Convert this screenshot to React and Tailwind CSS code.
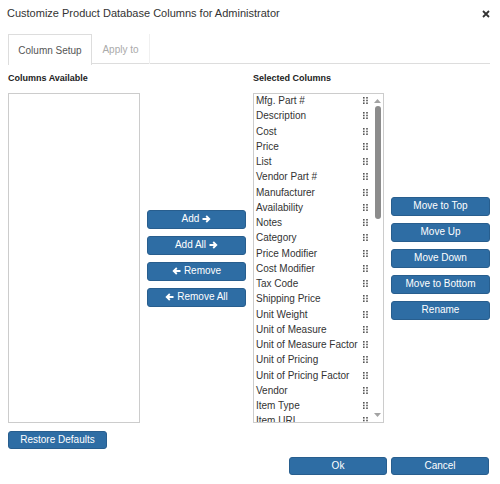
import React from 'react';

const selected = [
    'Mfg. Part #',
    'Description',
    'Cost',
    'Price',
    'List',
    'Vendor Part #',
    'Manufacturer',
    'Availability',
    'Notes',
    'Category',
    'Price Modifier',
    'Cost Modifier',
    'Tax Code',
    'Shipping Price',
    'Unit Weight',
    'Unit of Measure',
    'Unit of Measure Factor',
    'Unit of Pricing',
    'Unit of Pricing Factor',
    'Vendor',
    'Item Type',
    'Item URL',
];

const Grip = () => (
    <svg width="5" height="7" viewBox="0 0 5 7" className="shrink-0">
        {[0, 2.7, 5.4].map((y) => (
            <g key={y} fill="#555">
                <rect x="0" y={y} width="1.6" height="1.6" />
                <rect x="3.2" y={y} width="1.6" height="1.6" />
            </g>
        ))}
    </svg>
);

const ArrowRight = () => (
    <svg width="9" height="8" viewBox="0 0 9 8" className="ml-[3px]">
        <path d="M0.5 4 H7 M4.2 1 L7.3 4 L4.2 7" stroke="#fff" strokeWidth="1.8" fill="none" />
    </svg>
);

const ArrowLeft = () => (
    <svg width="9" height="8" viewBox="0 0 9 8" className="mr-[3px]">
        <path d="M8.5 4 H2 M4.8 1 L1.7 4 L4.8 7" stroke="#fff" strokeWidth="1.8" fill="none" />
    </svg>
);

const Btn = ({ children, className = '' }) => (
    <button
        className={`flex items-center justify-center rounded-[3px] border border-[#285e8e] bg-[#2e6da4] text-[10px] text-white leading-none ${className}`}
    >
        {children}
    </button>
);

export default function App() {
    return (
        <div className="w-[500px] h-[484px] bg-white text-[#333] font-['Liberation_Sans',Arial,sans-serif] overflow-hidden">
            {/* header */}
            <div className="flex items-center justify-between pl-[7px] pr-[10px] h-[27px]">
                <div className="text-[11px]">Customize Product Database Columns for Administrator</div>
                <svg width="8" height="8" viewBox="0 0 8 8">
                    <path d="M1 1 L7 7 M7 1 L1 7" stroke="#333" strokeWidth="1.8" />
                </svg>
            </div>

            {/* tabs */}
            <div className="mt-[7px] ml-[8px] mr-[10px] flex border-b border-[#ddd] h-[30px]">
                <div className="w-[84px] h-[31px] border border-b-0 border-[#ddd] bg-white flex items-center justify-center text-[10px] text-[#555]">
                    Column Setup
                </div>
                <div className="w-[58px] h-[30px] border-r border-[#f0f0f0] flex items-center justify-center text-[10px] text-[#aaa]">
                    Apply to
                </div>
            </div>

            {/* body */}
            <div className="pl-[8px] pr-[10px] grid grid-cols-[132px_99px_131px_99px] gap-x-[7px]">
                <div className="h-[29px] pt-[8px] text-[9px] font-bold text-[#222]">Columns Available</div>
                <div />
                <div className="h-[29px] pt-[8px] text-[9px] font-bold text-[#222]">Selected Columns</div>
                <div />

                <div className="h-[330px] border border-[#ccc]" />

                <div className="flex flex-col justify-center gap-[7px]">
                    <Btn className="h-[19px]">
                        Add <ArrowRight />
                    </Btn>
                    <Btn className="h-[19px]">
                        Add All <ArrowRight />
                    </Btn>
                    <Btn className="h-[19px]">
                        <ArrowLeft /> Remove
                    </Btn>
                    <Btn className="h-[19px]">
                        <ArrowLeft /> Remove All
                    </Btn>
                </div>

                <div className="h-[330px] border border-[#ccc] flex overflow-hidden">
                    <div className="flex-1 flex flex-col -mt-[1px]">
                        {selected.map((name) => (
                            <div key={name} className="h-[15.25px] shrink-0 flex items-center justify-between pl-[2px] pr-[4px] text-[10px] text-[#333]">
                                <span className="whitespace-nowrap">{name}</span>
                                <Grip />
                            </div>
                        ))}
                    </div>
                    <div className="w-[11px] flex flex-col items-center pt-[5px] pb-[5px]">
                        <svg width="7" height="4" viewBox="0 0 7 4">
                            <path d="M0 4 L3.5 0 L7 4 Z" fill="#a3a3a3" />
                        </svg>
                        <div className="mt-[3px] w-[6px] h-[113px] rounded-full bg-[#8c8c8c]" />
                        <div className="flex-1" />
                        <svg width="7" height="4" viewBox="0 0 7 4">
                            <path d="M0 0 L3.5 4 L7 0 Z" fill="#a3a3a3" />
                        </svg>
                    </div>
                </div>

                <div className="flex flex-col justify-center gap-[7px]">
                    <Btn className="h-[19px]">Move to Top</Btn>
                    <Btn className="h-[19px]">Move Up</Btn>
                    <Btn className="h-[19px]">Move Down</Btn>
                    <Btn className="h-[19px]">Move to Bottom</Btn>
                    <Btn className="h-[19px]">Rename</Btn>
                </div>
            </div>

            <div className="pl-[8px] mt-[8px]">
                <Btn className="w-[99px] h-[18px]">Restore Defaults</Btn>
            </div>

            <div className="mt-[8px] pr-[11px] flex justify-end gap-[4px]">
                <Btn className="w-[98px] h-[18px]">Ok</Btn>
                <Btn className="w-[98px] h-[18px]">Cancel</Btn>
            </div>
        </div>
    );
}
